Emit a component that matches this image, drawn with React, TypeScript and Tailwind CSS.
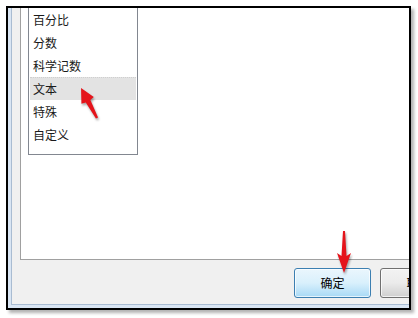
const items = ["百分比", "分数", "科学记数", "文本", "特殊", "自定义"];

const App = () => {
  return (
    <div className="relative w-[418px] h-[318px] bg-white overflow-hidden font-['Noto_Sans_CJK_SC','Noto_Sans',sans-serif] text-[12px] text-[#1a1a1a]">
      {/* Frame */}
      <div className="ml-[6px] mt-[6px] w-[405px] h-[304px] border-2 border-black overflow-hidden shadow-[3px_3px_3px_rgba(0,0,0,0.3)]">
        {/* Dialog (cropped at top/right) */}
        <div className="w-[480px] h-full border-l-[3px] border-b-[3px] border-[#d9e5f3]">
          <div className="h-full flex flex-col border-l border-b border-[#a9bcd2] bg-[#f0f0f0]">
            {/* White panel */}
            <div className="ml-[8px] h-[252px] shrink-0 bg-white border-l border-b border-[#a0a0a0] pl-[7px]">
              {/* List box */}
              <div className="w-[110px] border-l border-r border-b border-[#828790] bg-white px-px pb-[8px]">
                {items.map((item) => (
                  <div
                    key={item}
                    className={
                      item === "文本"
                        ? "h-[23px] flex items-center pl-[3px] bg-[#e3e3e3] border-t border-dotted border-[#cfcfcf]"
                        : "h-[23px] flex items-center pl-[3px]"
                    }
                  >
                    {item}
                  </div>
                ))}
              </div>
            </div>
            {/* Bottom bar */}
            <div className="flex gap-[9px] pl-[282px] pt-[8px]">
              <button className="w-[77px] h-[30px] rounded-[3px] border border-[#3c7fb1] bg-gradient-to-b from-[#eaf6fd] via-[#d9f0fc] to-[#a7d9f5] shadow-[inset_0_0_0_1px_rgba(255,255,255,0.7)] flex items-center justify-center text-black">
                确定
              </button>
              <button className="w-[77px] h-[30px] rounded-[3px] border border-[#707070] bg-gradient-to-b from-[#f2f2f2] via-[#ebebeb] to-[#cfcfcf] shadow-[inset_0_0_0_1px_rgba(255,255,255,0.7)] flex items-center justify-center text-black">
                取消
              </button>
            </div>
          </div>
        </div>
      </div>

      {/* Annotation arrows */}
      <svg
        className="absolute left-0 top-0 drop-shadow-[1px_2px_1px_rgba(0,0,0,0.35)]"
        width="418"
        height="318"
        viewBox="0 0 418 318"
      >
        <g transform="translate(97 118) rotate(-28)">
          <path d="M -1.2 0 L 1.2 0 L 2.6 -19 L 7 -20 L 0 -34 L -7 -20 L -2.6 -19 Z" fill="#e5141b" />
        </g>
        <path d="M 343 231 L 345 231 L 346.5 256 L 351 253 L 344 273 L 337 253 L 341.5 256 Z" fill="#e5141b" />
      </svg>
    </div>
  );
};

export default App;
